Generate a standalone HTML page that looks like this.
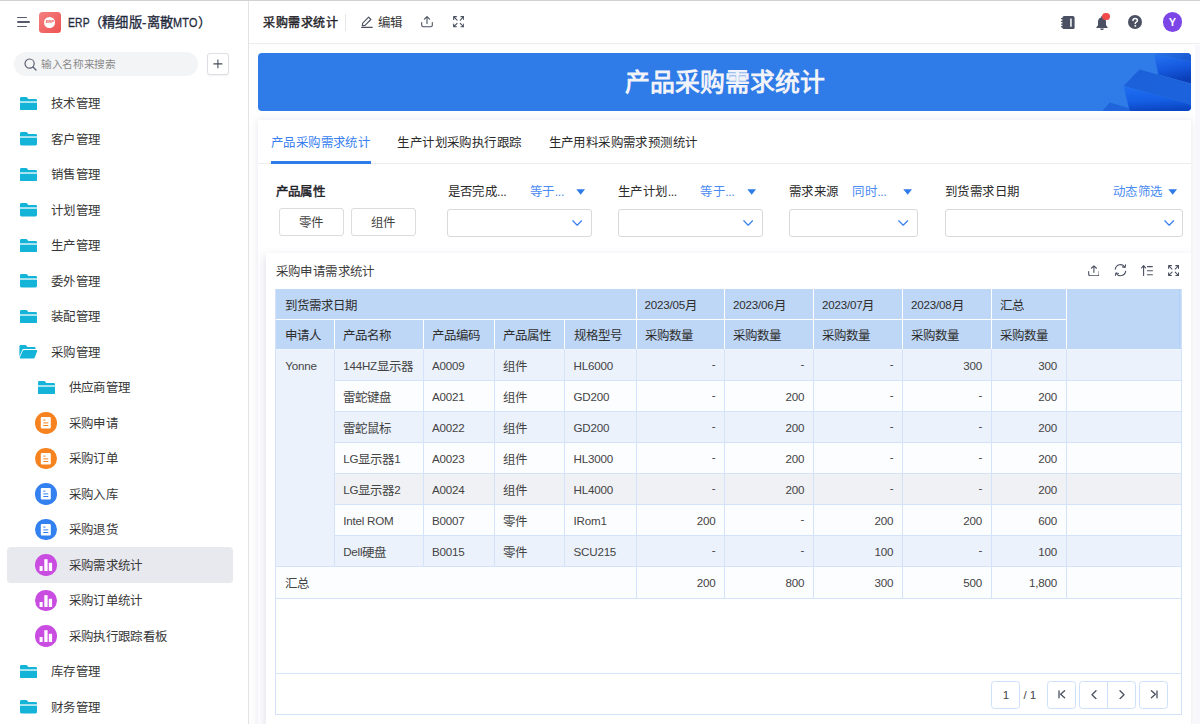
<!DOCTYPE html>
<html lang="zh-CN">
<head>
<meta charset="utf-8">
<title>采购需求统计</title>
<style>
*{box-sizing:border-box;margin:0;padding:0}
html,body{width:1200px;height:724px;overflow:hidden;background:#fff}
body{font-family:"Liberation Sans",sans-serif;font-size:12.45px;letter-spacing:.4px;color:#333;position:relative;-webkit-font-smoothing:antialiased}
.abs{position:absolute}
.t{position:absolute;white-space:nowrap;line-height:18px;height:18px}
/* top line */
#topline{left:0;top:0;width:1200px;height:1px;background:#d2d2d2}
/* sidebar */
#side{left:0;top:1px;width:249px;height:723px;background:#fff;border-right:1px solid #e3e3e3}
#main{left:249px;top:1px;width:951px;height:723px;background:#fefefe;overflow:hidden}
#hdr{left:0;top:0;width:951px;height:43px;background:#fff;border-bottom:1.3px solid #eeeeee;box-shadow:0 1px 2px rgba(0,0,0,.015)}
.ham{left:17px;height:1.4px;background:#555b6b;border-radius:1px}
#appico{left:39px;top:10.5px;width:21.5px;height:21.5px;border-radius:3.5px;background:linear-gradient(135deg,#f58080 0%,#ee5252 100%)}
#appico i{position:absolute;left:5.4px;top:5.4px;width:10.7px;height:10.7px;border-radius:50%;background:#fff;font-style:italic;font-weight:bold;font-size:4.2px;line-height:10.7px;text-align:center;color:#ee5555;letter-spacing:-.2px}
#search{left:14px;top:51px;width:184px;height:23.5px;border-radius:12px;background:#f3f4f6}
#plus{left:207.3px;top:52.3px;width:21.3px;height:21.3px;border:1px solid #dcdfe4;border-radius:3px;background:#fff;box-shadow:0 1px 2px rgba(0,0,0,.06)}
.mi{position:absolute;left:0;width:248px;height:35.5px}
.mi .lb{position:absolute;top:9.7px;line-height:18px;white-space:nowrap;color:#383838}
.mi.sel::before{content:"";position:absolute;left:7px;right:15px;top:0;bottom:0;background:#e8e9ef;border-radius:4px}
.mi svg{position:absolute}
.l0 svg{left:20px;top:11px}
.l0 .lb{left:51px}
.l1 svg.fd{left:38px;top:11px}
.l1 .lb{left:68.5px}
.circ{position:absolute;left:35.4px;top:7px;width:21.6px;height:21.6px;border-radius:50%}
.c-o{background:#f6831f}.c-b{background:#3380f0}.c-p{background:#c94de0}
#banner{background:#2f7ce8;border-radius:4px;overflow:hidden}
#tabcard{background:#fff;box-shadow:0 0 7px rgba(100,90,150,.14);overflow:hidden}
#tblcard{background:#fff;box-shadow:-2px 3px 9px rgba(100,90,150,.17)}
.btn{border:1px solid #dcdcdc;border-radius:3px;background:#fff;text-align:center;line-height:26px;color:#444}
.sbox{border:1px solid #d9d9d9;border-radius:3px;background:#fff}
.la{font-size:11.6px;letter-spacing:-.2px;position:relative;top:-1px}
.btn{padding-top:1px}
.sxw{display:inline-block;vertical-align:baseline;height:14px;overflow:visible}
.sx{display:inline-block;transform-origin:0 50%;font-size:12.9px}
.tt{letter-spacing:0}
</style>
</head>
<body>
<div id="topline" class="abs" style="z-index:9"></div>
<!--SIDEBAR-->
<div id="side" class="abs">
<div class="abs ham" style="top:16.0px;width:9.5px"></div><div class="abs ham" style="top:20.4px;width:12.5px"></div><div class="abs ham" style="top:24.9px;width:9.5px"></div>
<div id="appico" class="abs"><i>ERP</i></div>
<div class="t" id="apptitle" style="left:68px;top:12.6px;font-size:13.3px;letter-spacing:.3px;color:#1f2a3d;-webkit-text-stroke:.3px #1f2a3d"><span class="sxw" style="width:20.8px"><span class="sx" style="transform:scaleX(.8)">ERP</span></span>（精细版-离散<span class="sxw" style="width:24.6px"><span class="sx" style="transform:scaleX(.84)">MTO</span></span>）</div>
<div id="search" class="abs"><svg class="abs" style="left:10px;top:5.5px" width="13" height="13" viewBox="0 0 13 13"><circle cx="5.6" cy="5.6" r="4.6" fill="none" stroke="#5a6070" stroke-width="1.2"/><path d="M9 9L12 12" stroke="#5a6070" stroke-width="1.3" stroke-linecap="round"/></svg>
<div class="t" style="left:27px;top:3px;font-size:10.7px;letter-spacing:-.35px;color:#8a8a8a">输入名称来搜索</div></div>
<div id="plus" class="abs"><svg class="abs" style="left:4.8px;top:4.6px" width="9.8" height="9.8" viewBox="0 0 11 11"><path d="M5.5 .5V10.5M.5 5.5H10.5" stroke="#444a58" stroke-width="1.2"/></svg></div>
<div class="mi l0" style="top:84.5px"><svg class="fd" width="17" height="13.5" viewBox="0 0 17 13.5"><path d="M1.4 0H6.2Q6.8 0 7.2 .5L8.2 1.9H15.6Q17 1.9 17 3.3V12.1Q17 13.5 15.6 13.5H1.4Q0 13.5 0 12.1V1.4Q0 0 1.4 0Z" fill="#14b4d8"/><rect x="0" y="4.4" width="17" height="1.25" fill="#fff"/></svg><span class="lb">技术管理</span></div>
<div class="mi l0" style="top:120.0px"><svg class="fd" width="17" height="13.5" viewBox="0 0 17 13.5"><path d="M1.4 0H6.2Q6.8 0 7.2 .5L8.2 1.9H15.6Q17 1.9 17 3.3V12.1Q17 13.5 15.6 13.5H1.4Q0 13.5 0 12.1V1.4Q0 0 1.4 0Z" fill="#14b4d8"/><rect x="0" y="4.4" width="17" height="1.25" fill="#fff"/></svg><span class="lb">客户管理</span></div>
<div class="mi l0" style="top:155.5px"><svg class="fd" width="17" height="13.5" viewBox="0 0 17 13.5"><path d="M1.4 0H6.2Q6.8 0 7.2 .5L8.2 1.9H15.6Q17 1.9 17 3.3V12.1Q17 13.5 15.6 13.5H1.4Q0 13.5 0 12.1V1.4Q0 0 1.4 0Z" fill="#14b4d8"/><rect x="0" y="4.4" width="17" height="1.25" fill="#fff"/></svg><span class="lb">销售管理</span></div>
<div class="mi l0" style="top:191.0px"><svg class="fd" width="17" height="13.5" viewBox="0 0 17 13.5"><path d="M1.4 0H6.2Q6.8 0 7.2 .5L8.2 1.9H15.6Q17 1.9 17 3.3V12.1Q17 13.5 15.6 13.5H1.4Q0 13.5 0 12.1V1.4Q0 0 1.4 0Z" fill="#14b4d8"/><rect x="0" y="4.4" width="17" height="1.25" fill="#fff"/></svg><span class="lb">计划管理</span></div>
<div class="mi l0" style="top:226.5px"><svg class="fd" width="17" height="13.5" viewBox="0 0 17 13.5"><path d="M1.4 0H6.2Q6.8 0 7.2 .5L8.2 1.9H15.6Q17 1.9 17 3.3V12.1Q17 13.5 15.6 13.5H1.4Q0 13.5 0 12.1V1.4Q0 0 1.4 0Z" fill="#14b4d8"/><rect x="0" y="4.4" width="17" height="1.25" fill="#fff"/></svg><span class="lb">生产管理</span></div>
<div class="mi l0" style="top:262.0px"><svg class="fd" width="17" height="13.5" viewBox="0 0 17 13.5"><path d="M1.4 0H6.2Q6.8 0 7.2 .5L8.2 1.9H15.6Q17 1.9 17 3.3V12.1Q17 13.5 15.6 13.5H1.4Q0 13.5 0 12.1V1.4Q0 0 1.4 0Z" fill="#14b4d8"/><rect x="0" y="4.4" width="17" height="1.25" fill="#fff"/></svg><span class="lb">委外管理</span></div>
<div class="mi l0" style="top:297.5px"><svg class="fd" width="17" height="13.5" viewBox="0 0 17 13.5"><path d="M1.4 0H6.2Q6.8 0 7.2 .5L8.2 1.9H15.6Q17 1.9 17 3.3V12.1Q17 13.5 15.6 13.5H1.4Q0 13.5 0 12.1V1.4Q0 0 1.4 0Z" fill="#14b4d8"/><rect x="0" y="4.4" width="17" height="1.25" fill="#fff"/></svg><span class="lb">装配管理</span></div>
<div class="mi l0" style="top:333.0px"><svg class="fd" width="18.5" height="13.5" viewBox="0 0 18.5 13.5" style="left:19px"><path d="M1.8 0H6.4Q7 0 7.4 .5L8.3 1.9H15.2Q16.6 1.9 16.6 3.3V4H4.6Q3.6 4 3.2 4.9L.4 11.6V1.4Q.4 0 1.8 0Z" fill="#14b4d8"/><path d="M5.2 5H17.4Q18.6 5 18.2 6.1L15.8 12.5Q15.4 13.5 14.3 13.5H1.4Q.3 13.5 .8 12.4L3.6 6Q4 5 5.2 5Z" fill="#14b4d8"/></svg><span class="lb">采购管理</span></div>
<div class="mi l1" style="top:368.5px"><svg class="fd" width="17" height="13.5" viewBox="0 0 17 13.5"><path d="M1.4 0H6.2Q6.8 0 7.2 .5L8.2 1.9H15.6Q17 1.9 17 3.3V12.1Q17 13.5 15.6 13.5H1.4Q0 13.5 0 12.1V1.4Q0 0 1.4 0Z" fill="#14b4d8"/><rect x="0" y="4.4" width="17" height="1.25" fill="#fff"/></svg><span class="lb">供应商管理</span></div>
<div class="mi l1" style="top:404.0px"><span class="circ c-o"><svg width="21.6" height="21.6" viewBox="0 0 21.6 21.6" style="left:0;top:0"><rect x="5.8" y="5" width="10" height="11.6" rx="1.1" fill="#fff"/><rect x="8.3" y="7.6" width="2.2" height="1" fill="#f6831f"/><rect x="8.3" y="10.4" width="5" height="1" fill="#f6831f"/><rect x="8.3" y="13" width="5" height="1" fill="#f6831f"/></svg></span><span class="lb">采购申请</span></div>
<div class="mi l1" style="top:439.5px"><span class="circ c-o"><svg width="21.6" height="21.6" viewBox="0 0 21.6 21.6" style="left:0;top:0"><rect x="5.8" y="5" width="10" height="11.6" rx="1.1" fill="#fff"/><rect x="8.3" y="7.6" width="2.2" height="1" fill="#f6831f"/><rect x="8.3" y="10.4" width="5" height="1" fill="#f6831f"/><rect x="8.3" y="13" width="5" height="1" fill="#f6831f"/></svg></span><span class="lb">采购订单</span></div>
<div class="mi l1" style="top:475.0px"><span class="circ c-b"><svg width="21.6" height="21.6" viewBox="0 0 21.6 21.6" style="left:0;top:0"><rect x="5.8" y="5" width="10" height="11.6" rx="1.1" fill="#fff"/><rect x="8.3" y="7.6" width="2.2" height="1" fill="#3380f0"/><rect x="8.3" y="10.4" width="5" height="1" fill="#3380f0"/><rect x="8.3" y="13" width="5" height="1" fill="#3380f0"/></svg></span><span class="lb">采购入库</span></div>
<div class="mi l1" style="top:510.5px"><span class="circ c-b"><svg width="21.6" height="21.6" viewBox="0 0 21.6 21.6" style="left:0;top:0"><rect x="5.8" y="5" width="10" height="11.6" rx="1.1" fill="#fff"/><rect x="8.3" y="7.6" width="2.2" height="1" fill="#3380f0"/><rect x="8.3" y="10.4" width="5" height="1" fill="#3380f0"/><rect x="8.3" y="13" width="5" height="1" fill="#3380f0"/></svg></span><span class="lb">采购退货</span></div>
<div class="mi l1 sel" style="top:546.0px"><span class="circ c-p"><svg width="21.6" height="21.6" viewBox="0 0 21.6 21.6" style="left:0;top:0"><rect x="4.6" y="12" width="3" height="5" fill="#fff"/><rect x="9.3" y="5.2" width="3.3" height="11.8" fill="#fff"/><rect x="13.8" y="8.8" width="3.3" height="8.2" fill="#fff"/></svg></span><span class="lb">采购需求统计</span></div>
<div class="mi l1" style="top:581.5px"><span class="circ c-p"><svg width="21.6" height="21.6" viewBox="0 0 21.6 21.6" style="left:0;top:0"><rect x="4.6" y="12" width="3" height="5" fill="#fff"/><rect x="9.3" y="5.2" width="3.3" height="11.8" fill="#fff"/><rect x="13.8" y="8.8" width="3.3" height="8.2" fill="#fff"/></svg></span><span class="lb">采购订单统计</span></div>
<div class="mi l1" style="top:617.0px"><span class="circ c-p"><svg width="21.6" height="21.6" viewBox="0 0 21.6 21.6" style="left:0;top:0"><rect x="4.6" y="12" width="3" height="5" fill="#fff"/><rect x="9.3" y="5.2" width="3.3" height="11.8" fill="#fff"/><rect x="13.8" y="8.8" width="3.3" height="8.2" fill="#fff"/></svg></span><span class="lb">采购执行跟踪看板</span></div>
<div class="mi l0" style="top:652.5px"><svg class="fd" width="17" height="13.5" viewBox="0 0 17 13.5"><path d="M1.4 0H6.2Q6.8 0 7.2 .5L8.2 1.9H15.6Q17 1.9 17 3.3V12.1Q17 13.5 15.6 13.5H1.4Q0 13.5 0 12.1V1.4Q0 0 1.4 0Z" fill="#14b4d8"/><rect x="0" y="4.4" width="17" height="1.25" fill="#fff"/></svg><span class="lb">库存管理</span></div>
<div class="mi l0" style="top:688.0px"><svg class="fd" width="17" height="13.5" viewBox="0 0 17 13.5"><path d="M1.4 0H6.2Q6.8 0 7.2 .5L8.2 1.9H15.6Q17 1.9 17 3.3V12.1Q17 13.5 15.6 13.5H1.4Q0 13.5 0 12.1V1.4Q0 0 1.4 0Z" fill="#14b4d8"/><rect x="0" y="4.4" width="17" height="1.25" fill="#fff"/></svg><span class="lb">财务管理</span></div>

</div>
<!--MAIN-->
<div id="main" class="abs">
<div id="hdr" class="abs"><div class="t" id="htitle" style="left:14px;top:13.4px;font-size:12px;letter-spacing:.55px;color:#1f2329;-webkit-text-stroke:.4px #1f2329">采购需求统计</div>
<div class="abs" style="left:96px;top:12.5px;width:1px;height:17.5px;background:#e6e6e6"></div>
<svg class="abs" style="left:111.5px;top:14.5px" width="12" height="12" viewBox="0 0 12 12" fill="none" stroke="#4a5060" stroke-width="1.1" stroke-linejoin="round" stroke-linecap="round"><path d="M7.6 1.2L9.9 3.5L4 9.4L1.3 9.8L1.7 7.1Z"/><path d="M.6 11.4H11.2"/></svg>
<div class="t" style="left:129px;top:13px;color:#383838">编辑</div>
<svg class="abs" style="left:171.5px;top:15.2px" width="12" height="11.5" viewBox="0 0 12 11.5" fill="none" stroke="#4a5060" stroke-width="1.1" stroke-linecap="round" stroke-linejoin="round"><path d="M6 7.4V.8M3.4 3.2L6 .7L8.6 3.2"/><path d="M.7 6.6V9.2Q.7 10.8 2.3 10.8H9.7Q11.3 10.8 11.3 9.2V6.6"/></svg>
<svg class="abs" style="left:204px;top:15.4px" width="11.4" height="11.4" viewBox="0 0 12 12" fill="none" stroke="#4a5060" stroke-width="1.15" stroke-linecap="round" stroke-linejoin="round"><path d="M.7 3.6V.7H3.6M.9 .9L4.3 4.3"/><path d="M8.4 .7H11.3V3.6M11.1 .9L7.7 4.3"/><path d="M.7 8.4V11.3H3.6M.9 11.1L4.3 7.7"/><path d="M8.4 11.3H11.3V8.4M11.1 11.1L7.7 7.7"/></svg>
<!-- right icons -->
<svg class="abs" style="left:811.5px;top:14.6px" width="14" height="13.4" viewBox="0 0 14 13.4"><rect x="1.4" y="0" width="12.2" height="13.2" rx="1.8" fill="#4b5162"/><rect x="0" y="2" width="2.4" height="1.3" rx=".6" fill="#4b5162"/><rect x="0" y="4.7" width="2.4" height="1.3" rx=".6" fill="#4b5162"/><rect x="0" y="7.4" width="2.4" height="1.3" rx=".6" fill="#4b5162"/><rect x="0" y="10.1" width="2.4" height="1.3" rx=".6" fill="#4b5162"/><rect x="9.2" y="2.4" width="1.5" height="8.4" rx=".4" fill="#fff"/></svg>
<svg class="abs" style="left:846.5px;top:14.6px" width="12" height="14.4" viewBox="0 0 12 14.4"><path d="M6 0Q6.9 0 6.9 1V1.5Q10 2.4 10 6V9.2L11.6 11.2V11.9H.4V11.2L2 9.2V6Q2 2.4 5.1 1.5V1Q5.1 0 6 0Z" fill="#4b5162"/><path d="M4.2 12.6H7.8Q7.5 14.2 6 14.2Q4.5 14.2 4.2 12.6Z" fill="#4b5162"/></svg>
<div class="abs" style="left:853.2px;top:11.5px;width:7.4px;height:7.4px;border-radius:50%;background:#f14b4b"></div>
<div class="abs" style="left:879px;top:14px;width:14.4px;height:14.4px;border-radius:50%;background:#4b5162"></div>
<svg class="abs" style="left:879px;top:14px" width="14.4" height="14.4" viewBox="0 0 14.4 14.4" fill="none" stroke="#fff" stroke-width="1.5" stroke-linecap="round"><path d="M5 5.6Q5 3.6 7.2 3.6Q9.4 3.6 9.4 5.4Q9.4 6.5 8.2 7.1Q7.2 7.6 7.2 8.6"/><circle cx="7.2" cy="10.9" r=".5" fill="#fff" stroke-width=".8"/></svg>
<div class="abs" style="left:913.5px;top:11.2px;width:19.8px;height:19.8px;border-radius:50%;background:#7b45e8;color:#fff;font-size:11px;letter-spacing:0;font-weight:bold;line-height:20.6px;text-align:center">Y</div>
</div>
<div id="banner" class="abs" style="left:9px;top:52px;width:933px;height:58px">
<svg class="abs" style="left:0;top:0" width="933" height="58" viewBox="0 0 933 58">
<defs>
<linearGradient id="g1" x1="0" y1="0" x2=".25" y2="1"><stop offset="0" stop-color="#2473f0"/><stop offset=".55" stop-color="#1659df"/><stop offset="1" stop-color="#0a3fb8"/></linearGradient>
<linearGradient id="g2" x1="0" y1="0" x2="1" y2=".4"><stop offset="0" stop-color="#2a74e6"/><stop offset="1" stop-color="#1a5bd4"/></linearGradient>
<linearGradient id="g3" x1=".2" y1="0" x2=".35" y2="1"><stop offset="0" stop-color="#1f6ff2"/><stop offset=".6" stop-color="#155fe4"/><stop offset="1" stop-color="#0b45c2"/></linearGradient>
<linearGradient id="g4" x1="0" y1="0" x2="1" y2="1"><stop offset="0" stop-color="#1c60d8"/><stop offset="1" stop-color="#1b63dd"/></linearGradient>
</defs>
<polygon points="900,0 933,0 933,8.6 896.2,1.8" fill="url(#g2)"/>
<polygon points="896.2,1.8 933,8.6 933,30.4 900.3,21.6" fill="url(#g1)"/>
<polygon points="881.5,16.5 933,30.7 933,51.8 865.5,33" fill="url(#g4)"/>
<polygon points="865.5,33 933,51.8 933,58 871.6,58" fill="url(#g3)"/>
<polygon points="851.7,49.5 871.2,55.3 871.8,58 844.4,58" fill="#1f64da"/>
</svg>
<div class="t" id="btitle" style="left:0;width:933px;top:14px;height:30px;line-height:30px;text-align:center;font-size:24.9px;letter-spacing:0;font-weight:bold;color:#f2f3f8">产品采购需求统计</div>
</div>
<div id="tabcard" class="abs" style="left:9px;top:119px;width:933px;height:620px"><div id="tblcard" class="abs" style="left:8.4px;top:133px;width:940px;height:500px"></div></div>
<div class="abs" style="left:946.4px;top:43.5px;width:5px;height:690px;background:#f8f7fb"></div>
<div class="t" id="tab1" style="left:22px;top:133.4px;color:#3a7ff0">产品采购需求统计</div>
<div class="t" id="tab2" style="left:148.4px;top:133.4px;color:#2b2b2b">生产计划采购执行跟踪</div>
<div class="t" id="tab3" style="left:299.7px;top:133.4px;color:#2b2b2b">生产用料采购需求预测统计</div>
<div class="abs" style="left:9px;top:162.2px;width:933px;height:1px;background:#ececec"></div>
<div class="abs" style="left:22px;top:160px;width:99.6px;height:2.6px;background:#2f7be8"></div>
<div class="t" id="f0" style="left:26.6px;top:182.0px;color:#1f2329;-webkit-text-stroke:.45px #1f2329">产品属性</div>
<div class="abs btn" style="left:30.4px;top:207px;width:64.2px;height:27.8px">零件</div>
<div class="abs btn" style="left:102.4px;top:207px;width:64.2px;height:27.8px">组件</div>
<div class="t" id="fl1" style="left:198.5px;top:182.0px;color:#2b2b2b">是否完成<span style="letter-spacing:-.4px">...</span></div>
<div class="t" id="fo1" style="left:281px;top:182.0px;color:#4a8bf3">等于<span style="letter-spacing:-.4px">...</span></div>
<svg class="abs" style="left:326.8px;top:187.8px" width="9.4" height="6" viewBox="0 0 9.4 6"><path d="M.3 .2H9.1L4.7 5.8Z" fill="#2f7be8"/></svg>
<div class="abs sbox" style="left:198px;top:207.8px;width:145px;height:27.8px"></div>
<svg class="abs" style="left:323px;top:219.2px" width="10.4" height="6.2" viewBox="0 0 10.4 6.2" fill="none" stroke="#3a82f0" stroke-width="1.25" stroke-linecap="round" stroke-linejoin="round"><path d="M.8 .8L5.2 5.2L9.6 .8"/></svg>
<div class="t" id="fl2" style="left:369.1px;top:182.0px;color:#2b2b2b">生产计划<span style="letter-spacing:-.4px">...</span></div>
<div class="t" id="fo2" style="left:451.4px;top:182.0px;color:#4a8bf3">等于<span style="letter-spacing:-.4px">...</span></div>
<svg class="abs" style="left:497.5px;top:187.8px" width="9.4" height="6" viewBox="0 0 9.4 6"><path d="M.3 .2H9.1L4.7 5.8Z" fill="#2f7be8"/></svg>
<div class="abs sbox" style="left:369.1px;top:207.8px;width:144.5px;height:27.8px"></div>
<svg class="abs" style="left:493.7px;top:219.2px" width="10.4" height="6.2" viewBox="0 0 10.4 6.2" fill="none" stroke="#3a82f0" stroke-width="1.25" stroke-linecap="round" stroke-linejoin="round"><path d="M.8 .8L5.2 5.2L9.6 .8"/></svg>
<div class="t" id="fl3" style="left:540px;top:182.0px;color:#2b2b2b">需求来源</div>
<div class="t" id="fo3" style="left:603.4px;top:182.0px;color:#4a8bf3">同时<span style="letter-spacing:-.4px">...</span></div>
<svg class="abs" style="left:653.6px;top:187.8px" width="9.4" height="6" viewBox="0 0 9.4 6"><path d="M.3 .2H9.1L4.7 5.8Z" fill="#2f7be8"/></svg>
<div class="abs sbox" style="left:540px;top:207.8px;width:128.8px;height:27.8px"></div>
<svg class="abs" style="left:649.3px;top:219.2px" width="10.4" height="6.2" viewBox="0 0 10.4 6.2" fill="none" stroke="#3a82f0" stroke-width="1.25" stroke-linecap="round" stroke-linejoin="round"><path d="M.8 .8L5.2 5.2L9.6 .8"/></svg>
<div class="t" id="fl4" style="left:696px;top:182.0px;color:#2b2b2b">到货需求日期</div>
<div class="t" id="fo4" style="left:864px;top:182.0px;color:#4a8bf3">动态筛选</div>
<svg class="abs" style="left:918.8px;top:187.8px" width="9.4" height="6" viewBox="0 0 9.4 6"><path d="M.3 .2H9.1L4.7 5.8Z" fill="#2f7be8"/></svg>
<div class="abs sbox" style="left:696px;top:207.8px;width:238px;height:27.8px"></div>
<svg class="abs" style="left:915.3px;top:219.2px" width="10.4" height="6.2" viewBox="0 0 10.4 6.2" fill="none" stroke="#3a82f0" stroke-width="1.25" stroke-linecap="round" stroke-linejoin="round"><path d="M.8 .8L5.2 5.2L9.6 .8"/></svg>
<div class="t" id="ttitle" style="left:26.6px;top:262.0px;color:#3d3d3d">采购申请需求统计</div>
<svg class="abs" style="left:838.6px;top:263.8px" width="11.8" height="11.5" viewBox="0 0 12 11.5" fill="none" stroke="#4a5060" stroke-width="1.1" stroke-linecap="round" stroke-linejoin="round"><path d="M6 7.4V.8M3.4 3.2L6 .7L8.6 3.2"/><path d="M.7 6.6V9.2Q.7 10.8 2.3 10.8H9.7Q11.3 10.8 11.3 9.2V6.6"/></svg>
<svg class="abs" style="left:864.6px;top:263.4px" width="13" height="12.4" viewBox="0 0 13 12.4" fill="none" stroke="#4a5060" stroke-width="1.1" stroke-linecap="round" stroke-linejoin="round"><path d="M1.3 5.2A5.2 5.2 0 0 1 10.9 3.2"/><path d="M11.7 7.2A5.2 5.2 0 0 1 2.1 9.2"/><path d="M11.6 .9L11 3.4L8.5 2.9" /><path d="M1.4 11.5L2 9L4.5 9.5"/></svg>
<svg class="abs" style="left:892px;top:264px" width="12" height="11.4" viewBox="0 0 12 11.4" fill="none" stroke="#4a5060" stroke-width="1.1" stroke-linecap="round" stroke-linejoin="round"><path d="M2.6 10.6V.9M.6 2.8L2.6 .7L4.6 2.8"/><path d="M6.4 1.6H11.4M6.4 5.7H11.4M6.4 9.8H11.4"/></svg>
<svg class="abs" style="left:919px;top:264px" width="11.2" height="11.2" viewBox="0 0 12 12" fill="none" stroke="#4a5060" stroke-width="1.15" stroke-linecap="round" stroke-linejoin="round"><path d="M.7 3.6V.7H3.6M.9 .9L4.3 4.3"/><path d="M8.4 .7H11.3V3.6M11.1 .9L7.7 4.3"/><path d="M.7 8.4V11.3H3.6M.9 11.1L4.3 7.7"/><path d="M8.4 11.3H11.3V8.4M11.1 11.1L7.7 7.7"/></svg>
<div class="abs" style="left:26.4px;top:288.0px;width:907.0px;height:426.2px;border:1.4px solid #d3e2f9;background:#fff"></div>
<div class="abs" style="left:27.0px;top:288.0px;width:905.2px;height:60.2px;background:#bed7f6;"></div>
<div class="abs" style="left:27.0px;top:318px;width:790.3px;height:1.25px;background:#fff;"></div>
<div class="abs" style="left:85px;top:318.8px;width:1.3px;height:29.4px;background:#fff;"></div>
<div class="abs" style="left:174px;top:318.8px;width:1.3px;height:29.4px;background:#fff;"></div>
<div class="abs" style="left:245px;top:318.8px;width:1.3px;height:29.4px;background:#fff;"></div>
<div class="abs" style="left:315px;top:318.8px;width:1.3px;height:29.4px;background:#fff;"></div>
<div class="abs" style="left:387px;top:288.0px;width:1.3px;height:60.2px;background:#fff;"></div>
<div class="abs" style="left:475px;top:288.0px;width:1.3px;height:60.2px;background:#fff;"></div>
<div class="abs" style="left:564px;top:288.0px;width:1.3px;height:60.2px;background:#fff;"></div>
<div class="abs" style="left:653px;top:288.0px;width:1.3px;height:60.2px;background:#fff;"></div>
<div class="abs" style="left:742px;top:288.0px;width:1.3px;height:60.2px;background:#fff;"></div>
<div class="abs" style="left:817px;top:288.0px;width:1.3px;height:60.2px;background:#fff;"></div>
<div class="abs" style="left:930.4px;top:288.0px;width:1.0px;height:60.2px;background:#b3d0f7;"></div>
<div class="abs" style="left:85.5px;top:348.2px;width:846.7px;height:31.1px;background:#ebf2fc;"></div>
<div class="abs" style="left:85.5px;top:379.3px;width:846.7px;height:31.1px;background:#fcfdff;"></div>
<div class="abs" style="left:85.5px;top:410.4px;width:846.7px;height:31.1px;background:#ebf2fc;"></div>
<div class="abs" style="left:85.5px;top:441.5px;width:846.7px;height:31.1px;background:#fcfdff;"></div>
<div class="abs" style="left:85.5px;top:472.6px;width:846.7px;height:31.1px;background:#f0f1f4;"></div>
<div class="abs" style="left:85.5px;top:503.7px;width:846.7px;height:31.1px;background:#fcfdff;"></div>
<div class="abs" style="left:85.5px;top:534.8px;width:846.7px;height:31.1px;background:#ebf2fc;"></div>
<div class="abs" style="left:27.0px;top:348.2px;width:58.5px;height:217.7px;background:#ebf2fc;"></div>
<div class="abs" style="left:27.0px;top:565.9px;width:905.2px;height:31.1px;background:#fcfdff;"></div>
<div class="abs" style="left:27.0px;top:348px;width:905.2px;height:1.25px;background:#f1f6fe;"></div>
<div class="abs" style="left:85.5px;top:379px;width:846.7px;height:1.25px;background:#d4e3f9;"></div>
<div class="abs" style="left:85.5px;top:410px;width:846.7px;height:1.25px;background:#d4e3f9;"></div>
<div class="abs" style="left:85.5px;top:441px;width:846.7px;height:1.25px;background:#d4e3f9;"></div>
<div class="abs" style="left:85.5px;top:472px;width:846.7px;height:1.25px;background:#d4e3f9;"></div>
<div class="abs" style="left:85.5px;top:503px;width:846.7px;height:1.25px;background:#d4e3f9;"></div>
<div class="abs" style="left:85.5px;top:534px;width:846.7px;height:1.25px;background:#d4e3f9;"></div>
<div class="abs" style="left:27.0px;top:565px;width:905.2px;height:1.25px;background:#d4e3f9;"></div>
<div class="abs" style="left:27.0px;top:597px;width:905.2px;height:1.25px;background:#d4e3f9;"></div>
<div class="abs" style="left:85px;top:348.2px;width:1.25px;height:217.7px;background:#d4e3f9;"></div>
<div class="abs" style="left:174px;top:348.2px;width:1.25px;height:217.7px;background:#d4e3f9;"></div>
<div class="abs" style="left:245px;top:348.2px;width:1.25px;height:217.7px;background:#d4e3f9;"></div>
<div class="abs" style="left:315px;top:348.2px;width:1.25px;height:217.7px;background:#d4e3f9;"></div>
<div class="abs" style="left:387px;top:348.2px;width:1.25px;height:248.8px;background:#d4e3f9;"></div>
<div class="abs" style="left:475px;top:348.2px;width:1.25px;height:248.8px;background:#d4e3f9;"></div>
<div class="abs" style="left:564px;top:348.2px;width:1.25px;height:248.8px;background:#d4e3f9;"></div>
<div class="abs" style="left:653px;top:348.2px;width:1.25px;height:248.8px;background:#d4e3f9;"></div>
<div class="abs" style="left:742px;top:348.2px;width:1.25px;height:248.8px;background:#d4e3f9;"></div>
<div class="abs" style="left:817px;top:348.2px;width:1.25px;height:248.8px;background:#d4e3f9;"></div>
<div class="abs" style="left:27.0px;top:672.0px;width:905.2px;height:1.2px;background:#d6e4fa;"></div>
<div class="t tt " id="h_date" style="left:36.3px;top:296.0px;color:#2e2e2e">到货需求日期</div>
<div class="t tt " style="left:395.5px;top:296.0px;color:#2e2e2e"><span class="la">2023/05</span>月</div>
<div class="t tt " style="left:484.1px;top:296.0px;color:#2e2e2e"><span class="la">2023/06</span>月</div>
<div class="t tt " style="left:572.9px;top:296.0px;color:#2e2e2e"><span class="la">2023/07</span>月</div>
<div class="t tt " style="left:662.0px;top:296.0px;color:#2e2e2e"><span class="la">2023/08</span>月</div>
<div class="t tt " style="left:750.8px;top:296.0px;color:#2e2e2e">汇总</div>
<div class="t tt " style="left:36.3px;top:326.2px;color:#2e2e2e">申请人</div>
<div class="t tt " style="left:94.2px;top:326.2px;color:#2e2e2e">产品名称</div>
<div class="t tt " style="left:182.9px;top:326.2px;color:#2e2e2e">产品编码</div>
<div class="t tt " style="left:254.0px;top:326.2px;color:#2e2e2e">产品属性</div>
<div class="t tt " style="left:324.5px;top:326.2px;color:#2e2e2e">规格型号</div>
<div class="t tt " style="left:395.5px;top:326.2px;color:#2e2e2e">采购数量</div>
<div class="t tt " style="left:484.1px;top:326.2px;color:#2e2e2e">采购数量</div>
<div class="t tt " style="left:572.9px;top:326.2px;color:#2e2e2e">采购数量</div>
<div class="t tt " style="left:662.0px;top:326.2px;color:#2e2e2e">采购数量</div>
<div class="t tt " style="left:750.8px;top:326.2px;color:#2e2e2e">采购数量</div>
<div class="t tt " id="yonne" style="left:36.3px;top:356.65px;color:#444"><span class="la">Yonne</span></div>
<div class="t tt " style="left:94.2px;top:356.65px;color:#444"><span class="la">144HZ</span>显示器</div>
<div class="t tt " style="left:182.9px;top:356.65px;color:#444"><span class="la">A0009</span></div>
<div class="t tt " style="left:254.0px;top:356.65px;color:#444">组件</div>
<div class="t tt " style="left:324.5px;top:356.65px;color:#444"><span class="la">HL6000</span></div>
<div class="t tt " style="right:484.6px;top:356.65px;color:#444"><span class="la" style="top:-3px">-</span></div>
<div class="t tt " style="right:395.8px;top:356.65px;color:#444"><span class="la" style="top:-3px">-</span></div>
<div class="t tt " style="right:306.7px;top:356.65px;color:#444"><span class="la" style="top:-3px">-</span></div>
<div class="t tt " style="right:217.9px;top:356.65px;color:#444"><span class="la">300</span></div>
<div class="t tt " style="right:142.9px;top:356.65px;color:#444"><span class="la">300</span></div>
<div class="t tt " style="left:94.2px;top:387.75px;color:#444">雷蛇键盘</div>
<div class="t tt " style="left:182.9px;top:387.75px;color:#444"><span class="la">A0021</span></div>
<div class="t tt " style="left:254.0px;top:387.75px;color:#444">组件</div>
<div class="t tt " style="left:324.5px;top:387.75px;color:#444"><span class="la">GD200</span></div>
<div class="t tt " style="right:484.6px;top:387.75px;color:#444"><span class="la" style="top:-3px">-</span></div>
<div class="t tt " style="right:395.8px;top:387.75px;color:#444"><span class="la">200</span></div>
<div class="t tt " style="right:306.7px;top:387.75px;color:#444"><span class="la" style="top:-3px">-</span></div>
<div class="t tt " style="right:217.9px;top:387.75px;color:#444"><span class="la" style="top:-3px">-</span></div>
<div class="t tt " style="right:142.9px;top:387.75px;color:#444"><span class="la">200</span></div>
<div class="t tt " style="left:94.2px;top:418.85px;color:#444">雷蛇鼠标</div>
<div class="t tt " style="left:182.9px;top:418.85px;color:#444"><span class="la">A0022</span></div>
<div class="t tt " style="left:254.0px;top:418.85px;color:#444">组件</div>
<div class="t tt " style="left:324.5px;top:418.85px;color:#444"><span class="la">GD200</span></div>
<div class="t tt " style="right:484.6px;top:418.85px;color:#444"><span class="la" style="top:-3px">-</span></div>
<div class="t tt " style="right:395.8px;top:418.85px;color:#444"><span class="la">200</span></div>
<div class="t tt " style="right:306.7px;top:418.85px;color:#444"><span class="la" style="top:-3px">-</span></div>
<div class="t tt " style="right:217.9px;top:418.85px;color:#444"><span class="la" style="top:-3px">-</span></div>
<div class="t tt " style="right:142.9px;top:418.85px;color:#444"><span class="la">200</span></div>
<div class="t tt " style="left:94.2px;top:449.95px;color:#444"><span class="la">LG</span>显示器<span class="la">1</span></div>
<div class="t tt " style="left:182.9px;top:449.95px;color:#444"><span class="la">A0023</span></div>
<div class="t tt " style="left:254.0px;top:449.95px;color:#444">组件</div>
<div class="t tt " style="left:324.5px;top:449.95px;color:#444"><span class="la">HL3000</span></div>
<div class="t tt " style="right:484.6px;top:449.95px;color:#444"><span class="la" style="top:-3px">-</span></div>
<div class="t tt " style="right:395.8px;top:449.95px;color:#444"><span class="la">200</span></div>
<div class="t tt " style="right:306.7px;top:449.95px;color:#444"><span class="la" style="top:-3px">-</span></div>
<div class="t tt " style="right:217.9px;top:449.95px;color:#444"><span class="la" style="top:-3px">-</span></div>
<div class="t tt " style="right:142.9px;top:449.95px;color:#444"><span class="la">200</span></div>
<div class="t tt " style="left:94.2px;top:481.05px;color:#444"><span class="la">LG</span>显示器<span class="la">2</span></div>
<div class="t tt " style="left:182.9px;top:481.05px;color:#444"><span class="la">A0024</span></div>
<div class="t tt " style="left:254.0px;top:481.05px;color:#444">组件</div>
<div class="t tt " style="left:324.5px;top:481.05px;color:#444"><span class="la">HL4000</span></div>
<div class="t tt " style="right:484.6px;top:481.05px;color:#444"><span class="la" style="top:-3px">-</span></div>
<div class="t tt " style="right:395.8px;top:481.05px;color:#444"><span class="la">200</span></div>
<div class="t tt " style="right:306.7px;top:481.05px;color:#444"><span class="la" style="top:-3px">-</span></div>
<div class="t tt " style="right:217.9px;top:481.05px;color:#444"><span class="la" style="top:-3px">-</span></div>
<div class="t tt " style="right:142.9px;top:481.05px;color:#444"><span class="la">200</span></div>
<div class="t tt " style="left:94.2px;top:512.15px;color:#444"><span class="la">Intel ROM</span></div>
<div class="t tt " style="left:182.9px;top:512.15px;color:#444"><span class="la">B0007</span></div>
<div class="t tt " style="left:254.0px;top:512.15px;color:#444">零件</div>
<div class="t tt " style="left:324.5px;top:512.15px;color:#444"><span class="la">IRom1</span></div>
<div class="t tt " style="right:484.6px;top:512.15px;color:#444"><span class="la">200</span></div>
<div class="t tt " style="right:395.8px;top:512.15px;color:#444"><span class="la" style="top:-3px">-</span></div>
<div class="t tt " style="right:306.7px;top:512.15px;color:#444"><span class="la">200</span></div>
<div class="t tt " style="right:217.9px;top:512.15px;color:#444"><span class="la">200</span></div>
<div class="t tt " style="right:142.9px;top:512.15px;color:#444"><span class="la">600</span></div>
<div class="t tt " style="left:94.2px;top:543.25px;color:#444"><span class="la">Dell</span>硬盘</div>
<div class="t tt " style="left:182.9px;top:543.25px;color:#444"><span class="la">B0015</span></div>
<div class="t tt " style="left:254.0px;top:543.25px;color:#444">零件</div>
<div class="t tt " style="left:324.5px;top:543.25px;color:#444"><span class="la">SCU215</span></div>
<div class="t tt " style="right:484.6px;top:543.25px;color:#444"><span class="la" style="top:-3px">-</span></div>
<div class="t tt " style="right:395.8px;top:543.25px;color:#444"><span class="la" style="top:-3px">-</span></div>
<div class="t tt " style="right:306.7px;top:543.25px;color:#444"><span class="la">100</span></div>
<div class="t tt " style="right:217.9px;top:543.25px;color:#444"><span class="la" style="top:-3px">-</span></div>
<div class="t tt " style="right:142.9px;top:543.25px;color:#444"><span class="la">100</span></div>
<div class="t tt " style="left:36.3px;top:574.35px;color:#444">汇总</div>
<div class="t tt " style="right:484.6px;top:574.35px;color:#444"><span class="la">200</span></div>
<div class="t tt " style="right:395.8px;top:574.35px;color:#444"><span class="la">800</span></div>
<div class="t tt " style="right:306.7px;top:574.35px;color:#444"><span class="la">300</span></div>
<div class="t tt " style="right:217.9px;top:574.35px;color:#444"><span class="la">500</span></div>
<div class="t tt " style="right:142.9px;top:574.35px;color:#444"><span class="la">1,800</span></div>
<div class="abs" style="left:742.2px;top:679.5px;width:29.2px;height:28.2px;border:1px solid #cfe0fa;border-radius:3.5px;background:#fff"></div>
<div class="abs" style="left:798.4px;top:679.5px;width:28.2px;height:28.2px;border:1px solid #cfe0fa;border-radius:3.5px;background:#fff"></div>
<div class="abs" style="left:830.3px;top:679.5px;width:56.3px;height:28.2px;border:1px solid #cfe0fa;border-radius:3.5px;background:#fff"></div>
<div class="abs" style="left:890.3px;top:679.5px;width:28.4px;height:28.2px;border:1px solid #cfe0fa;border-radius:3.5px;background:#fff"></div>
<div class="abs" style="left:858px;top:679.8px;width:1px;height:27.2px;background:#cfe0fa;"></div>
<div class="t" style="left:742.2px;width:29.2px;text-align:center;top:686.2px;color:#444"><span class="la">1</span></div>
<div class="t" style="left:774.6px;top:686.2px;color:#444"><span class="la">/ 1</span></div>
<svg class="abs" style="left:809px;top:689px" width="8" height="8.6" viewBox="0 0 8 8.6" fill="none" stroke="#4a5060" stroke-width="1.3" stroke-linecap="round" stroke-linejoin="round"><path d="M1 .8V7.8M6.6 .8L2.6 4.3L6.6 7.8"/></svg>
<svg class="abs" style="left:841.6px;top:688.6px" width="6" height="9.6" viewBox="0 0 6 9.6" fill="none" stroke="#4a5060" stroke-width="1.3" stroke-linecap="round" stroke-linejoin="round"><path d="M5 .8L1 4.8L5 8.8"/></svg>
<svg class="abs" style="left:869.6px;top:688.6px" width="6" height="9.6" viewBox="0 0 6 9.6" fill="none" stroke="#4a5060" stroke-width="1.3" stroke-linecap="round" stroke-linejoin="round"><path d="M1 .8L5 4.8L1 8.8"/></svg>
<svg class="abs" style="left:900.6px;top:689px" width="8" height="8.6" viewBox="0 0 8 8.6" fill="none" stroke="#4a5060" stroke-width="1.3" stroke-linecap="round" stroke-linejoin="round"><path d="M7 .8V7.8M1.4 .8L5.4 4.3L1.4 7.8"/></svg>
</div>
</body>
</html>
